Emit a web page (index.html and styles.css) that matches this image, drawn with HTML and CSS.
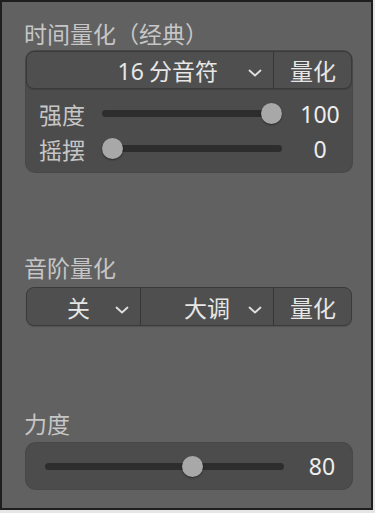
FILE: index.html
```html
<!DOCTYPE html>
<html>
	<head>
		<meta charset="utf-8">
		<title>量化</title>
		<link rel="stylesheet" href="styles.css">
	</head>
	<body>
		<div class="frame">
			<h2 class="title first">时间量化（经典）</h2>
			<div class="panel">
				<div class="seg">
					<div class="drop wide"><span class="txt"><span class="num">16</span> 分音符</span><svg class="chev" width="14" height="8" viewBox="0 0 14 8"><polyline points="1.5,1.5 7,6.5 12.5,1.5"/></svg></div>
					<div class="btn">量化</div>
				</div>
				<div class="row">
					<span class="lbl">强度</span>
					<div class="track"><span class="thumb" style="left: calc((100% - 21px) * 1)"></span></div>
					<span class="val">100</span>
				</div>
				<div class="row">
					<span class="lbl">摇摆</span>
					<div class="track"><span class="thumb" style="left: calc((100% - 21px) * 0)"></span></div>
					<span class="val">0</span>
				</div>
			</div>

			<h2 class="title">音阶量化</h2>
			<div class="seg solo">
				<div class="drop off"><span class="txt">关</span><svg class="chev" width="14" height="8" viewBox="0 0 14 8"><polyline points="1.5,1.5 7,6.5 12.5,1.5"/></svg></div>
				<div class="drop key"><span class="txt">大调</span><svg class="chev" width="14" height="8" viewBox="0 0 14 8"><polyline points="1.5,1.5 7,6.5 12.5,1.5"/></svg></div>
				<div class="btn">量化</div>
			</div>

			<h2 class="title last">力度</h2>
			<div class="panel vel">
				<div class="row">
					<div class="track"><span class="thumb" style="left: calc((100% - 21px) * 0.63)"></span></div>
					<span class="val">80</span>
				</div>
			</div>
		</div>
	</body>
</html>
```

FILE: styles.css
```css
*{
	margin: 0;
	padding: 0;
	box-sizing: border-box;
}
body{
	background: #e6e6e6;
	font-family: "Noto Sans CJK SC", "Noto Sans", sans-serif;
}
.frame{
	width: 373px;
	height: 510px;
	border: 2px solid #1e1e1e;
	background: #616161;
	padding: 0 19px 0 24px;
}
.title{
	font-size: 23px;
	font-weight: normal;
	line-height: 28px;
	color: #c6c6c6;
	margin: 81px 0 6px -2px;
}
.title.first{
	margin-top: 17px;
	margin-bottom: 4px;
}
.title.last{
	margin-top: 83px;
}
.panel{
	background: #4c4c4c;
	border-radius: 9px;
	box-shadow: 0 0 0 1px #484848;
	padding-bottom: 6px;
}
.seg{
	height: 38px;
	display: flex;
	background: #4f4f4f;
	border: 1px solid #3a3a3a;
	border-radius: 8px;
	box-shadow: 0 1px 1px rgba(0,0,0,0.15);
}
.seg.solo{
	height: 39px;
}
.drop{
	display: flex;
	align-items: center;
	justify-content: flex-end;
	padding-right: 11px;
	border-right: 1px solid #363636;
	color: #e6e6e6;
	font-size: 23px;
}
.drop.wide{
	flex: 1;
}
.drop.wide .txt{
	margin-right: 30px;
}
.drop.off{
	width: 114px;
}
.drop.off .txt{
	margin-right: 25px;
}
.drop.key{
	flex: 1;
}
.drop.key .txt{
	margin-right: 18px;
}
.txt{
	line-height: 36px;
}
.num{
	font-family: "Noto Sans", sans-serif;
}
.chev{
	margin-top: 6px;
	fill: none;
	stroke: #e0e0e0;
	stroke-width: 1.8;
	stroke-linecap: round;
	stroke-linejoin: round;
}
.btn{
	width: 77px;
	display: flex;
	align-items: center;
	justify-content: center;
	color: #e6e6e6;
	font-size: 23px;
	padding-left: 1px;
}
.row{
	height: 35px;
	display: flex;
	align-items: center;
	padding-left: 13px;
}
.panel > .seg + .row{
	margin-top: 7px;
}
.lbl{
	width: 63px;
	font-size: 23px;
	color: #c6c6c6;
	line-height: 28px;
}
.track{
	width: 180px;
	height: 7px;
	border-radius: 4px;
	background: #2d2d2d;
	position: relative;
}
.thumb{
	position: absolute;
	top: -7px;
	width: 21px;
	height: 21px;
	border-radius: 50%;
	background: #a8a8a8;
	box-shadow: 0 1px 2px rgba(0,0,0,0.45);
}
.val{
	flex: 1;
	text-align: center;
	font-family: "Noto Sans", sans-serif;
	font-size: 23px;
	color: #eeeeee;
	padding-left: 10px;
	padding-right: 4px;
}
.vel{
	height: 46px;
	padding-bottom: 0;
	border-radius: 10px;
}
.vel .row{
	height: 46px;
	padding-left: 19px;
}
.vel .track{
	width: 239px;
}
.vel .val{
	padding-left: 12px;
}
```
